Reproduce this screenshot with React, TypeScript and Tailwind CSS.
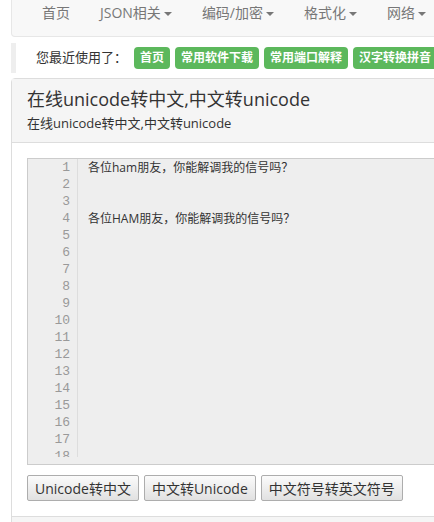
const navItems = [
  { label: '首页', caret: false },
  { label: 'JSON相关', caret: true },
  { label: '编码/加密', caret: true },
  { label: '格式化', caret: true },
  { label: '网络', caret: true },
];

const recent = ['首页', '常用软件下载', '常用端口解释', '汉字转换拼音'];

const lines: string[] = [
  '各位ham朋友，你能解调我的信号吗？',
  '',
  '',
  '各位HAM朋友，你能解调我的信号吗？',
  ...Array.from({ length: 14 }, () => ''),
];

function Caret() {
  return (
    <span className="inline-block ml-[3px] align-middle w-0 h-0 border-l-[4px] border-r-[4px] border-t-[4px] border-l-transparent border-r-transparent border-t-[#777]" />
  );
}

export default function App() {
  return (
    <div className="w-[434px] h-[522px] overflow-hidden bg-white text-[#333] font-[family-name:'Open_Sans','Noto_Sans_CJK_SC',sans-serif]">
      <div className="w-[760px] pl-[11px]">
        {/* Navbar */}
        <nav className="h-[37px] bg-[#f8f8f8] border border-t-0 border-[#e7e7e7] rounded-b-[4px]">
          <ul className="flex pl-[15px] pt-[3px]">
            {navItems.map((item) => (
              <li key={item.label} className="px-[15px] text-[14px] leading-[20px] text-[#777] whitespace-nowrap">
                {item.label}
                {item.caret && <Caret />}
              </li>
            ))}
          </ul>
        </nav>

        {/* Recently used */}
        <div className="mt-[6px] h-[30px] border-l-[5px] border-[#eee] flex items-center pl-[20px]">
          <span className="text-[13px] mr-[7px] whitespace-nowrap">您最近使用了：</span>
          <div className="flex gap-[5px]">
            {recent.map((r) => (
              <span key={r} className="h-[22px] leading-[22px] px-[6px] text-[12px] font-bold text-white bg-[#5cb85c] rounded-[4px] whitespace-nowrap">
                {r}
              </span>
            ))}
          </div>
        </div>

        {/* Panel */}
        <div className="mt-[5px] border border-[#ddd] rounded-t-[4px]">
          <div className="bg-[#f5f5f5] border-b border-[#ddd] px-[15px] py-[10px]">
            <h1 className="text-[18px] leading-[20px]">在线unicode转中文,中文转unicode</h1>
            <p className="mt-[5px] text-[13px] leading-[18px]">在线unicode转中文,中文转unicode</p>
          </div>

          <div className="p-[15px]">
            {/* Editor */}
            <div className="border border-[#ccc] bg-[#eee]">
              <div className="h-[298px] overflow-hidden flex">
                <div className="w-[50px] border-r border-[#ddd] bg-[#eee] shrink-0">
                  {lines.map((_, i) => (
                    <div key={i} className="h-[17px] leading-[17px] pr-[7px] text-right text-[13px] text-[#999] font-[family-name:'Liberation_Mono',monospace]">
                      {i + 1}
                    </div>
                  ))}
                </div>
                <div className="pl-[10px] flex-1">
                  {lines.map((l, i) => (
                    <div key={i} className="h-[17px] leading-[17px] text-[12px] text-[#333] whitespace-pre">
                      {l}
                    </div>
                  ))}
                </div>
              </div>
              <div className="h-[7px]" />
            </div>

            {/* Buttons */}
            <div className="mt-[10px] flex gap-[5px]">
              {['Unicode转中文', '中文转Unicode', '中文符号转英文符号'].map((b) => (
                <button
                  key={b}
                  className="h-[26px] px-[7px] text-[14px] text-[#333] border border-[#adadad] rounded-[2px] bg-linear-to-b from-[#fbfbfb] to-[#e1e1e1] whitespace-nowrap"
                >
                  {b}
                </button>
              ))}
            </div>
          </div>

          <div className="h-[20px] bg-[#f5f5f5] border-t border-[#ddd]" />
        </div>
      </div>
    </div>
  );
}
